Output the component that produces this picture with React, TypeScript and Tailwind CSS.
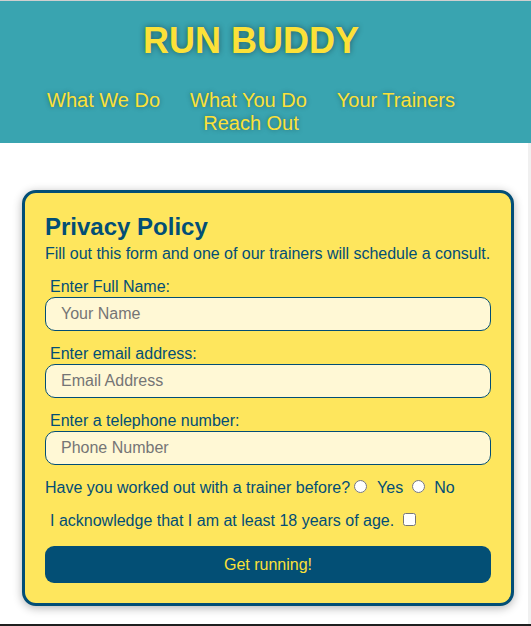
export default function App() {
  const navItems = ["What We Do", "What You Do", "Your Trainers", "Reach Out"];

  return (
    <div className="w-[531px] h-[626px] flex flex-col overflow-hidden border-t border-t-[#cfcfcf] border-b-2 border-b-[#1f1f1f] font-['Liberation_Sans',Arial,sans-serif]">
      <header className="h-[142px] shrink-0 bg-[#39a4b0]">
        <div className="w-[502px] flex flex-col items-center">
          <h1 className="pt-[19px] text-[36px] leading-[41px] font-bold text-[#fce138] [text-shadow:0_0_6px_rgba(0,0,0,0.45)]">
            RUN BUDDY
          </h1>
          <nav className="mt-[28px] flex flex-wrap justify-center text-[20px] leading-[23px] text-[#fce138] [text-shadow:0_0_5px_rgba(0,0,0,0.35)]">
            {navItems.map((item) => (
              <a key={item} href="#" className="mx-[15px]">
                {item}
              </a>
            ))}
          </nav>
        </div>
      </header>

      <div className="flex-1 flex bg-white">
        <main className="flex-1 pt-[47px] pl-[22px]">
          <div className="w-[492px] rounded-[14px] border-[3px] border-[#024e76] bg-[#fee65d] px-[20px] pt-[20px] pb-[20px] text-[#024e76] shadow-[0_2px_10px_rgba(0,0,0,0.3)]">
            <h2 className="text-[24px] leading-[28px] font-bold">Privacy Policy</h2>
            <p className="mt-[4px] whitespace-nowrap text-[16px] leading-[18px] tracking-[-0.02px]">
              Fill out this form and one of our trainers will schedule a consult.
            </p>

            <form className="text-[16px] leading-[18px]">
              <label className="block mt-[15px] pl-[5px]">Enter Full Name:</label>
              <input
                type="text"
                placeholder="Your Name"
                className="block mt-[1px] w-full h-[34px] rounded-[10px] border border-[#024e76] bg-[#fff8d5] px-[15px] text-[16px] placeholder:text-[#757575]"
              />

              <label className="block mt-[14px] pl-[5px]">Enter email address:</label>
              <input
                type="email"
                placeholder="Email Address"
                className="block mt-[1px] w-full h-[34px] rounded-[10px] border border-[#024e76] bg-[#fff8d5] px-[15px] text-[16px] placeholder:text-[#757575]"
              />

              <label className="block mt-[14px] pl-[5px]">Enter a telephone number:</label>
              <input
                type="tel"
                placeholder="Phone Number"
                className="block mt-[1px] w-full h-[34px] rounded-[10px] border border-[#024e76] bg-[#fff8d5] px-[15px] text-[16px] placeholder:text-[#757575]"
              />

              <div className="mt-[14px]">
                Have you worked out with a trainer before?
                <input type="radio" name="trainer" className="ml-[4px]" />
                <span className="ml-[10px]">Yes</span>
                <input type="radio" name="trainer" className="ml-[9px]" />
                <span className="ml-[9px]">No</span>
              </div>

              <div className="mt-[15px] pl-[5px]">
                I acknowledge that I am at least 18 years of age.{" "}
                <input type="checkbox" className="ml-[4px]" />
              </div>

              <button
                type="button"
                className="block mt-[16px] w-full h-[37px] rounded-[9px] bg-[#034f75] text-[16px] text-[#fce138]"
              >
                Get running!
              </button>
            </form>
          </div>
        </main>
        <div className="w-[3px] bg-[#f0f0f0]" />
      </div>
    </div>
  );
}
